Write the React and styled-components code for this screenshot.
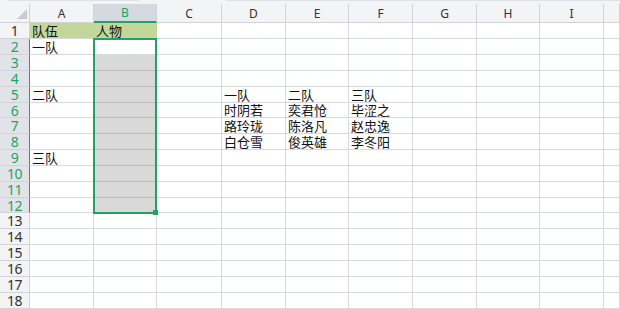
import React from "react";
import styled, { createGlobalStyle } from "styled-components";

const GREEN = "#1ea362";
const GRID = "#d5d9e2";
const HEAD_BG = "#f3f4f6";
const HEAD_LINE = "#d0d3da";

const Global = createGlobalStyle`
  html, body { margin: 0; padding: 0; background: #fff; overflow: hidden; }
  #root { width: 620px; height: 309px; overflow: hidden; }
`;

const Page = styled.div`
  display: flex;
  flex-direction: column;
  width: 620px;
  height: 309px;
  background: #fff;
`;

const TopStrip = styled.div`
  display: flex;
  height: 8px;
  padding-left: 8px;
  gap: 87px;
  background: ${HEAD_BG};
`;

const StripLine = styled.div`
  height: 1px;
  background: #dde0e5;
  ${(p) => (p.$w ? `width: ${p.$w}px;` : "flex: 1;")}
`;

const Sheet = styled.div`
  display: grid;
  grid-template-columns: 30px 64px 63px 65px 64px 63px 64px 64px 63px 64px 1fr;
  grid-template-rows: 19px repeat(5, 16px) 15px repeat(5, 16px) 15px repeat(6, 16px);
`;

const Slot = styled.div`
  grid-row: ${(p) => p.$row};
  grid-column: ${(p) => p.$col};
`;

const Corner = styled(Slot)`
  box-sizing: border-box;
  display: flex;
  justify-content: flex-end;
  align-items: flex-end;
  padding: 0 2px 3px 0;
  background: ${HEAD_BG};
  border-right: 1px solid ${HEAD_LINE};
  border-bottom: 1px solid ${HEAD_LINE};
`;

const ColHead = styled(Slot)`
  box-sizing: border-box;
  display: flex;
  align-items: center;
  justify-content: center;
  font-family: "Noto Sans", "Open Sans", sans-serif;
  font-size: 12px;
  color: ${(p) => (p.$sel ? GREEN : "#333")};
  background: ${(p) => (p.$sel ? "#d6d9df" : HEAD_BG)};
  border-right: 1px solid ${HEAD_LINE};
  border-bottom: ${(p) => (p.$sel ? `2px solid ${GREEN}` : `1px solid ${HEAD_LINE}`)};
`;

const RowHead = styled(Slot)`
  box-sizing: border-box;
  display: flex;
  align-items: center;
  justify-content: center;
  font-family: "Noto Sans", "Open Sans", sans-serif;
  font-size: 14px;
  letter-spacing: -0.6px;
  color: ${(p) => (p.$sel ? GREEN : "#333")};
  background: ${(p) => (p.$sel ? "#e1e3e8" : HEAD_BG)};
  border-right: 1px solid ${(p) => (p.$sel ? GREEN : HEAD_LINE)};
  border-bottom: 1px solid ${HEAD_LINE};
`;

const Cell = styled(Slot)`
  box-sizing: border-box;
  display: flex;
  align-items: flex-end;
  padding: 0 0 1px 2px;
  font-family: "Noto Sans CJK SC", "Noto Sans", sans-serif;
  font-size: 13px;
  line-height: 13px;
  color: #111;
  white-space: nowrap;
  background: ${(p) => (p.$fill === "green" ? "#c4d79b" : p.$fill === "shade" ? "#d9d9d9" : "#fff")};
  border-right: 1px solid ${(p) => (p.$fill === "green" ? "#c4d79b" : GRID)};
  border-bottom: 1px solid ${(p) => (p.$fill === "shade" ? "#b9bcc3" : GRID)};
`;

const Selection = styled.div`
  grid-column: 3;
  grid-row: 3 / 14;
  margin: -1px 0 -1px -1px;
  border: 2px solid ${GREEN};
  position: relative;
  pointer-events: none;
`;

const Handle = styled.div`
  position: absolute;
  right: -3px;
  bottom: -3px;
  width: 5px;
  height: 5px;
  background: ${GREEN};
`;

const COLS = ["A", "B", "C", "D", "E", "F", "G", "H", "I", ""];

const DATA = {
  "1-0": "队伍",
  "1-1": "人物",
  "2-0": "一队",
  "5-0": "二队",
  "9-0": "三队",
  "5-3": "一队",
  "5-4": "二队",
  "5-5": "三队",
  "6-3": "时阴若",
  "6-4": "奕君怆",
  "6-5": "毕涩之",
  "7-3": "路玲珑",
  "7-4": "陈洛凡",
  "7-5": "赵忠逸",
  "8-3": "白仓雪",
  "8-4": "俊英雄",
  "8-5": "李冬阳",
};

const ROWS = Array.from({ length: 18 }, (_, i) => i + 1);

function fillFor(r, c) {
  if (r === 1 && (c === 0 || c === 1)) return "green";
  if (c === 1 && r >= 3 && r <= 12) return "shade";
  return undefined;
}

export default function App() {
  return (
    <Page>
      <Global />
      <TopStrip>
        <StripLine $w={131} />
        <StripLine />
      </TopStrip>
      <Sheet>
        <Corner $row={1} $col={1}>
          <svg width="10" height="10" viewBox="0 0 10 10">
            <polygon points="10,0 10,10 0,10" fill="#c9cbd1" />
          </svg>
        </Corner>
        {COLS.map((c, i) => (
          <ColHead key={"h" + i} $row={1} $col={i + 2} $sel={c === "B"}>
            {c}
          </ColHead>
        ))}
        {ROWS.map((r) => (
          <React.Fragment key={r}>
            <RowHead $row={r + 1} $col={1} $sel={r >= 2 && r <= 12}>
              {r}
            </RowHead>
            {COLS.map((_, c) => (
              <Cell key={c} $row={r + 1} $col={c + 2} $fill={fillFor(r, c)}>
                {DATA[`${r}-${c}`] || ""}
              </Cell>
            ))}
          </React.Fragment>
        ))}
        <Selection>
          <Handle />
        </Selection>
      </Sheet>
    </Page>
  );
}
